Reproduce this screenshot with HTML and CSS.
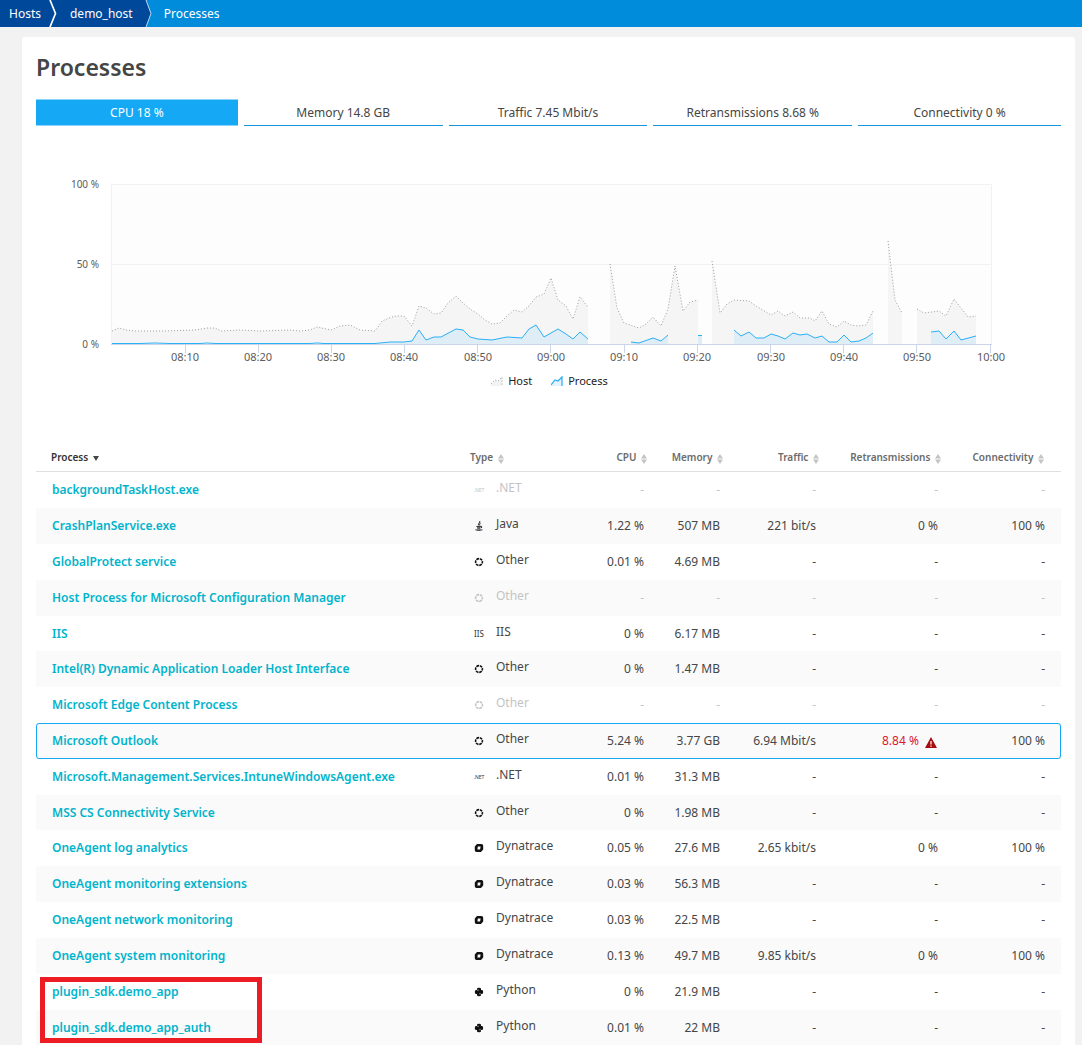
FILE: index.html
```html
<!DOCTYPE html>
<html lang="en">
<head>
<meta charset="utf-8">
<meta name="viewport" content="width=device-width, initial-scale=1">
<title>Processes</title>
<link rel="stylesheet" href="styles.css">
</head>
<body>
<svg class="sprite" aria-hidden="true">
  <symbol id="sort" viewBox="0 0 6 10"><path d="M3 0L6 4.4H0zM3 10L0 5.6H6z" fill="#c4c4c4"/></symbol>
  <symbol id="other" viewBox="0 0 10 10"><circle cx="5" cy="5" r="3.4" fill="none" stroke="currentColor" stroke-width="1.6" stroke-dasharray="2.8 .76" stroke-dashoffset="1.4"/></symbol>
  <symbol id="dynatrace" viewBox="0 0 10 10"><path fill="currentColor" fill-rule="evenodd" d="M3 1H7.4Q9.2 1 9.2 2.8V6.4L7 9H2.6Q.8 9 .8 7.2V3.6zM3.8 3.6L3.4 6.5H6.1L6.6 3.6z"/></symbol>
  <symbol id="python" viewBox="0 0 10 10"><path fill="currentColor" d="M3 1.8Q3 .8 5 .8T7 1.8V3.1H8Q9.2 3.1 9.2 5T8 6.9H7V8.2Q7 9.2 5 9.2T3 8.2V6.9H2Q.8 6.9 .8 5T2 3.1H3z"/><path d="M3 3.2H5M5 6.8H7" stroke="#fff" stroke-width=".5"/></symbol>
  <symbol id="java" viewBox="0 0 10 10"><path fill="none" stroke="currentColor" stroke-width=".9" d="M5.8 0C6.4 1.8 3.6 2.2 4.8 4.4M6.6 2.2C5 3 5.6 3.4 5.8 4.4M2.4 5.4H7M7.2 5.2Q9 5.6 7 7M3 6.8H6.6M3.3 8H6.3M1.4 8.8Q4.6 10 8.4 8.8"/></symbol>
</svg>

<nav class="crumbs" aria-label="Breadcrumb">
  <a class="crumb crumb-first" href="#">Hosts</a>
  <svg class="crumb-arrow" viewBox="0 0 8 27" aria-hidden="true"><path d="M0 0H1L7 13.5L1 27H0z" fill="#00489a"/><path d="M1 0L6.5 13.5L1 27" fill="none" stroke="#fff" stroke-width="1.7"/></svg>
  <a class="crumb crumb-host" href="#">demo_host</a>
  <svg class="crumb-arrow crumb-arrow-last" viewBox="0 0 8 27" aria-hidden="true"><path d="M0 0H1L6 13.5L1 27H0z" fill="#00489a"/><path d="M1 0L6 13.5L1 27" fill="none" stroke="#b9dcf4" stroke-width="1"/></svg>
  <a class="crumb crumb-current" href="#" aria-current="page">Processes</a>
</nav>

<main class="panel">
  <h1>Processes</h1>
  <div class="tabs" role="tablist">
    <button class="tab active" role="tab" aria-selected="true">CPU 18 %</button>
    <button class="tab" role="tab">Memory 14.8 GB</button>
    <button class="tab" role="tab">Traffic 7.45 Mbit/s</button>
    <button class="tab" role="tab">Retransmissions 8.68 %</button>
    <button class="tab" role="tab">Connectivity 0 %</button>
  </div>

  <figure class="chart">
    <svg class="plot" viewBox="36 174 1025 194" role="img" aria-label="CPU usage of host and process">
      <rect x="111" y="184" width="881" height="160" fill="#fdfdfd"/>
      <path d="M111 184.500H991.500V344M111.500 184V344M111 264.500H991" fill="none" stroke="#f2f2f2"/>
      <g class="host-area">
        <path d="M112 344V331L119 328L126 330L135 331H165L195 330L207 328H215L221 331L240 330L260 331L290 330L300 331L310 330L317 327L331 330L340 326L350 325L360 330L375 331L382 321L389 318L396 316H404L412 326L419 306L426 308L434 314L441 313L448 303L456 296L463 303L470 309L478 314L485 320L492 324L500 323L507 316L514 310L522 312L529 306L536 297L544 294L551 278L558 300L566 306L573 319L580 297L588 307V344z"/>
        <path d="M610 344V264L617 308L624 323L639 328L646 324L653 317L661 326L668 309L675 266L683 311L690 302L698 300V344z"/>
        <path d="M712 344V261L720 313L727 304L734 300L749 301L756 306L771 315L778 311L785 316L793 312L800 318H810L815 321L822 311L829 324L837 327L844 321L851 325L858 326L866 325L873 311V344z"/>
        <path d="M888 344V241L895 300L902 313V344z"/>
        <path d="M917 344V309L924 313L939 311L946 316L954 299L961 308L968 317L976 316V344z"/>
      </g>
      <g class="host-line">
        <path d="M112 331L119 328L126 330L135 331H165L195 330L207 328H215L221 331L240 330L260 331L290 330L300 331L310 330L317 327L331 330L340 326L350 325L360 330L375 331L382 321L389 318L396 316H404L412 326L419 306L426 308L434 314L441 313L448 303L456 296L463 303L470 309L478 314L485 320L492 324L500 323L507 316L514 310L522 312L529 306L536 297L544 294L551 278L558 300L566 306L573 319L580 297L588 307"/>
        <path d="M610 264L617 308L624 323L639 328L646 324L653 317L661 326L668 309L675 266L683 311L690 302L698 300"/>
        <path d="M712 261L720 313L727 304L734 300L749 301L756 306L771 315L778 311L785 316L793 312L800 318H810L815 321L822 311L829 324L837 327L844 321L851 325L858 326L866 325L873 311"/>
        <path d="M888 241L895 300L902 313"/>
        <path d="M917 309L924 313L939 311L946 316L954 299L961 308L968 317L976 316"/>
      </g>
      <g class="proc-area">
        <path d="M375 344L390 342H404L412 341L419 330L426 340L434 337H441L456 329L463 330L470 337L478 339L492 340L507 337L522 338L529 329L536 325L544 337L551 333L558 329L566 334L573 339L580 332L588 339V344z"/>
        <path d="M631 344V342L639 343L653 338L661 341L668 335V344zM698 344V335H702V344z"/>
        <path d="M734 344V330L741 336L749 332L756 338H764L771 334L778 336L785 339L793 333L800 335L807 334L815 338L822 336L829 342H837L844 335L851 342L859 341L866 338L873 333V344z"/>
        <path d="M931 344V332L939 331L946 339L954 331L961 340L976 336V344z"/>
      </g>
      <path d="M111 344.500H992M185.500 345V353M258.500 345V353M331.500 345V353M404.500 345V353M477.500 345V353M550.500 345V353M624.500 345V353M697.500 345V353M770.500 345V353M843.500 345V353M916.500 345V353M990.500 345V353" stroke="#ccd6eb" fill="none"/>
      <g class="proc-line">
        <path d="M112 343.500H140L155 343L170 343.500H200L207 343L215 343.500H310L317 343L324 343.500H375L390 342H404L412 341L419 330L426 340L434 337H441L456 329L463 330L470 337L478 339L492 340L507 337L522 338L529 329L536 325L544 337L551 333L558 329L566 334L573 339L580 332L588 339"/>
        <path d="M631 342L639 343L653 338L661 341L668 335M698 335.500H702"/>
        <path d="M734 330L741 336L749 332L756 338H764L771 334L778 336L785 339L793 333L800 335L807 334L815 338L822 336L829 342H837L844 335L851 342L859 341L866 338L873 333"/>
        <path d="M931 332L939 331L946 339L954 331L961 340L976 336"/>
      </g>
      <g class="axis axis-y">
        <text x="99" y="188">100 %</text><text x="99" y="268">50 %</text><text x="99" y="348">0 %</text>
      </g>
      <g class="axis axis-x">
        <text x="185" y="361">08:10</text><text x="258" y="361">08:20</text><text x="331" y="361">08:30</text><text x="404" y="361">08:40</text><text x="478" y="361">08:50</text><text x="551" y="361">09:00</text><text x="624" y="361">09:10</text><text x="697" y="361">09:20</text><text x="771" y="361">09:30</text><text x="844" y="361">09:40</text><text x="917" y="361">09:50</text><text x="991" y="361">10:00</text>
      </g>
    </svg>
    <figcaption class="legend">
      <span class="key"><svg viewBox="0 0 12 10" aria-hidden="true"><path d="M0 10V8L4 4L7 5L11 1V10z" fill="#f3f3f3"/><path d="M0 8L4 4L7 5L11 1V10" fill="none" stroke="#999" stroke-dasharray="1 2"/></svg>Host</span>
      <span class="key"><svg viewBox="0 0 12 10" aria-hidden="true"><path d="M0 10V8L4 4L7 5L11 1V10z" fill="#e4f3fd"/><path d="M0 9L4 4L7 5L11 1V10" fill="none" stroke="#2bacf0" stroke-width="1.2"/></svg>Process</span>
    </figcaption>
  </figure>

  <table class="list">
    <colgroup><col><col class="c-type"><col class="c-cpu"><col class="c-mem"><col class="c-traffic"><col class="c-retr"><col class="c-conn"></colgroup>
    <thead>
      <tr>
        <th class="sorted" scope="col" aria-sort="ascending">Process <svg class="caret" viewBox="0 0 6 5" aria-hidden="true"><path d="M0 0H6L3 5z" fill="#454646"/></svg></th>
        <th scope="col">Type <svg class="sort" aria-hidden="true"><use href="#sort"/></svg></th>
        <th scope="col">CPU <svg class="sort" aria-hidden="true"><use href="#sort"/></svg></th>
        <th scope="col">Memory <svg class="sort" aria-hidden="true"><use href="#sort"/></svg></th>
        <th scope="col">Traffic <svg class="sort" aria-hidden="true"><use href="#sort"/></svg></th>
        <th scope="col">Retransmissions <svg class="sort" aria-hidden="true"><use href="#sort"/></svg></th>
        <th scope="col">Connectivity <svg class="sort" aria-hidden="true"><use href="#sort"/></svg></th>
      </tr>
    </thead>
    <tbody>
      <tr class="idle"><td><a href="#">backgroundTaskHost.exe</a></td><td><div class="type"><span class="mark mark-net">.NET</span><span>.NET</span></div></td><td>-</td><td>-</td><td>-</td><td>-</td><td>-</td></tr>
      <tr><td><a href="#">CrashPlanService.exe</a></td><td><div class="type"><svg class="mark"><use href="#java"/></svg><span>Java</span></div></td><td>1.22 %</td><td>507 MB</td><td>221 bit/s</td><td>0 %</td><td>100 %</td></tr>
      <tr><td><a href="#">GlobalProtect service</a></td><td><div class="type"><svg class="mark"><use href="#other"/></svg><span>Other</span></div></td><td>0.01 %</td><td>4.69 MB</td><td>-</td><td>-</td><td>-</td></tr>
      <tr class="idle"><td><a href="#">Host Process for Microsoft Configuration Manager</a></td><td><div class="type"><svg class="mark"><use href="#other"/></svg><span>Other</span></div></td><td>-</td><td>-</td><td>-</td><td>-</td><td>-</td></tr>
      <tr class="short"><td><a href="#">IIS</a></td><td><div class="type"><span class="mark mark-iis">IIS</span><span>IIS</span></div></td><td>0 %</td><td>6.17 MB</td><td>-</td><td>-</td><td>-</td></tr>
      <tr><td><a href="#">Intel(R) Dynamic Application Loader Host Interface</a></td><td><div class="type"><svg class="mark"><use href="#other"/></svg><span>Other</span></div></td><td>0 %</td><td>1.47 MB</td><td>-</td><td>-</td><td>-</td></tr>
      <tr class="idle"><td><a href="#">Microsoft Edge Content Process</a></td><td><div class="type"><svg class="mark"><use href="#other"/></svg><span>Other</span></div></td><td>-</td><td>-</td><td>-</td><td>-</td><td>-</td></tr>
      <tr class="selected"><td><a href="#">Microsoft Outlook</a></td><td><div class="type"><svg class="mark"><use href="#other"/></svg><span>Other</span></div></td><td>5.24 %</td><td>3.77 GB</td><td>6.94 Mbit/s</td><td class="alert">8.84 % <svg class="warn" viewBox="0 0 12 11" role="img" aria-label="Warning"><path d="M6 0L12 11H0z" fill="#a90c10"/><path d="M6 4V7.500M6 8.500V9.700" stroke="#fff" stroke-width="1.200"/></svg></td><td>100 %</td></tr>
      <tr><td><a href="#">Microsoft.Management.Services.IntuneWindowsAgent.exe</a></td><td><div class="type"><span class="mark mark-net">.NET</span><span>.NET</span></div></td><td>0.01 %</td><td>31.3 MB</td><td>-</td><td>-</td><td>-</td></tr>
      <tr class="short"><td><a href="#">MSS CS Connectivity Service</a></td><td><div class="type"><svg class="mark"><use href="#other"/></svg><span>Other</span></div></td><td>0 %</td><td>1.98 MB</td><td>-</td><td>-</td><td>-</td></tr>
      <tr><td><a href="#">OneAgent log analytics</a></td><td><div class="type"><svg class="mark"><use href="#dynatrace"/></svg><span>Dynatrace</span></div></td><td>0.05 %</td><td>27.6 MB</td><td>2.65 kbit/s</td><td>0 %</td><td>100 %</td></tr>
      <tr><td><a href="#">OneAgent monitoring extensions</a></td><td><div class="type"><svg class="mark"><use href="#dynatrace"/></svg><span>Dynatrace</span></div></td><td>0.03 %</td><td>56.3 MB</td><td>-</td><td>-</td><td>-</td></tr>
      <tr><td><a href="#">OneAgent network monitoring</a></td><td><div class="type"><svg class="mark"><use href="#dynatrace"/></svg><span>Dynatrace</span></div></td><td>0.03 %</td><td>22.5 MB</td><td>-</td><td>-</td><td>-</td></tr>
      <tr><td><a href="#">OneAgent system monitoring</a></td><td><div class="type"><svg class="mark"><use href="#dynatrace"/></svg><span>Dynatrace</span></div></td><td>0.13 %</td><td>49.7 MB</td><td>9.85 kbit/s</td><td>0 %</td><td>100 %</td></tr>
      <tr><td class="marked"><a href="#">plugin_sdk.demo_app</a></td><td><div class="type"><svg class="mark"><use href="#python"/></svg><span>Python</span></div></td><td>0 %</td><td>21.9 MB</td><td>-</td><td>-</td><td>-</td></tr>
      <tr class="short"><td><a href="#">plugin_sdk.demo_app_auth</a></td><td><div class="type"><svg class="mark"><use href="#python"/></svg><span>Python</span></div></td><td>0.01 %</td><td>22 MB</td><td>-</td><td>-</td><td>-</td></tr>
    </tbody>
  </table>
</main>
</body>
</html>
```
FILE: styles.css
```css
*, *::after { box-sizing: border-box; }

body {
  margin: 0;
  background: #f2f2f2;
  color: #454646;
  font: 12px/16px "Noto Sans", "Open Sans", sans-serif;
}

.sprite { display: none; }

/* Breadcrumb bar */
.crumbs {
  display: flex;
  height: 27px;
  background: #008cdb;
  line-height: 27px;
}
.crumb { color: #fff; text-decoration: none; }
.crumb-first { padding: 0 8px 0 9px; background: #00489a; }
.crumb-host { padding: 0 12px 0 13px; background: #00489a; }
.crumb-current { padding-left: 11px; }
.crumb-arrow { width: 8px; height: 27px; background: #00489a; }
.crumb-arrow-last { background: none; }

/* Content panel */
.panel {
  margin: 10px 7px 0 22px;
  padding: 14px 14px 0;
  background: #fff;
  border-radius: 3px 3px 0 0;
}
h1 {
  margin: 0 0 16px;
  font-size: 23px;
  line-height: 32px;
  font-weight: 600;
}

.tabs {
  display: grid;
  grid-template-columns: 202fr 199fr 199fr 199fr 203fr;
  gap: 6px;
}
.tab {
  height: 27px;
  padding: 1px 0 0;
  border: 0;
  border-bottom: 1px solid #1496dc;
  background: none;
  color: #454646;
  font: inherit;
}
.tab.active {
  padding: 0;
  border: 1px solid #8ed3fa;
  border-width: 1px 0;
  background: #14a8f5;
  color: #fff;
}

/* Chart */
.chart { margin: 48px 0 0; }
.plot { display: block; width: 100%; height: auto; }
.host-area { fill: #f5f5f5; }
.host-line { fill: none; stroke: #9c9c9c; stroke-width: 1; stroke-dasharray: 1 2; }
.proc-area { fill: #dfedf7; }
.proc-line { fill: none; stroke: #2ab0f5; stroke-width: 1; }
.axis { font-size: 11px; fill: #5c5c5c; }
.axis-y { text-anchor: end; font-size: 10px; }
.axis-x { text-anchor: middle; }
.legend {
  display: flex;
  justify-content: center;
  gap: 19px;
  padding: 5px 0 0 2px;
  color: #222;
  font-size: 11px;
}
.key { display: flex; align-items: center; gap: 5px; }
.key svg { width: 12px; height: 10px; }

/* Process table */
.list {
  width: 100%;
  margin-top: 54px;
  border-collapse: separate;
  border-spacing: 0;
  table-layout: fixed;
}
.c-type { width: 108px; }
.c-cpu { width: 72px; }
.c-mem { width: 76px; }
.c-traffic { width: 96px; }
.c-retr { width: 122px; }
.c-conn { width: 117px; }

th {
  height: 29px;
  padding: 0 3px 0 0;
  border-bottom: 1px solid #e0e0e0;
  color: #6b6b6b;
  font-size: 10px;
  font-weight: 600;
  text-align: right;
  white-space: nowrap;
}
th:first-child { padding-left: 15px; text-align: left; }
th:nth-child(2) { text-align: left; }
th:last-child { padding-right: 17px; }
th.sorted { color: #333; }
.caret { width: 6px; height: 5px; margin-left: 2px; }
.sort { width: 6px; height: 10px; margin-left: 2px; vertical-align: -3px; }

td {
  height: 36px;
  padding: 0 6px 0 0;
  text-align: right;
  white-space: nowrap;
}
.short td { height: 35px; }
tbody tr:nth-child(even) { background: #fafafa; }
td:first-child { padding-left: 16px; text-align: left; }
td:last-child { padding-right: 16px; }
td a { color: #00b4cc; font-weight: 600; text-decoration: none; }

.type { display: flex; align-items: center; gap: 12px; padding: 0 0 4px 4px; }
.mark { flex: none; width: 10px; height: 10px; position: relative; top: 2px; color: #111; }
.mark-net, .mark-iis { display: flex; justify-content: center; line-height: 10px; color: #333; }
.mark-net { font-size: 5px; }
.mark-iis { font-size: 8px; }
.idle td, .idle .mark { color: #c4c4c4; }

.selected { outline: 1px solid #14a8f5; outline-offset: -1px; border-radius: 3px; }
.alert { color: #dc172a; }
.selected .alert { padding-right: 7px; }
.warn { width: 12px; height: 11px; margin-left: 3px; vertical-align: -3px; }

/* Highlight frame around the two plugin rows */
.marked { position: relative; }
.marked::after {
  content: "";
  position: absolute;
  top: 3px;
  left: 4px;
  width: 222px;
  height: 66px;
  border: 5px solid #ed1c24;
  pointer-events: none;
}
```
